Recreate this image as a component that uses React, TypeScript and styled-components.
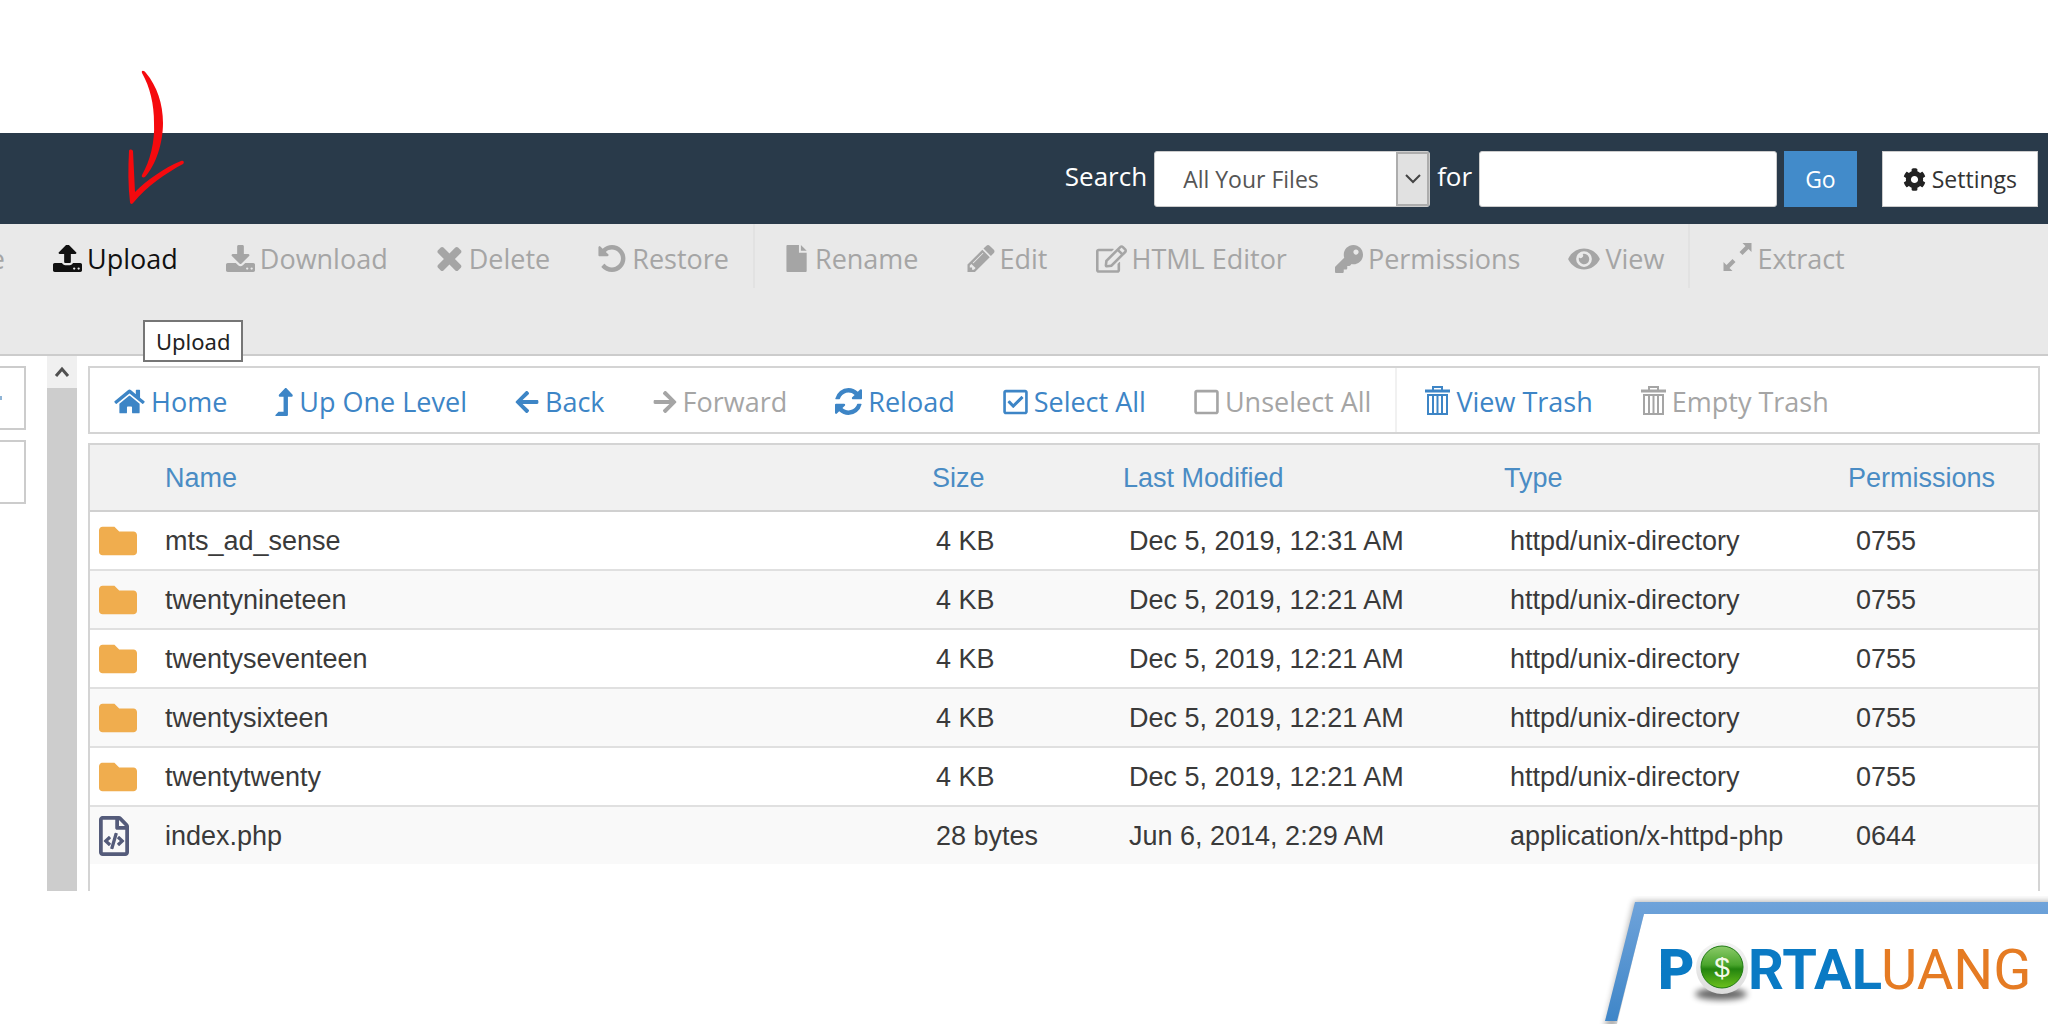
import React from "react";
import styled, { createGlobalStyle } from "styled-components";
import {
  FaRegEdit, FaKey, FaEye, FaCog, FaHome, FaLevelUpAlt, FaArrowLeft, FaArrowRight,
  FaRegCheckSquare, FaRegSquare, FaFolder, FaRegFileCode,
} from "react-icons/fa";

const Global = createGlobalStyle`
  * { box-sizing: border-box; }
  body { margin: 0; background: #fff; font-family: "Open Sans", "Noto Sans", sans-serif; }
  button, input, select { font-family: inherit; margin: 0; }
`;

const Page = styled.div`
  position: relative;
  min-height: 100vh;
  display: flex;
  flex-direction: column;
  overflow: hidden;
  padding-top: 133px;
`;

const Header = styled.header`
  display: flex;
  align-items: center;
  justify-content: flex-end;
  padding: 18px 10px 17px;
  background: #293a4a;
`;

const SearchForm = styled.form`
  display: flex;
  align-items: center;
  gap: 7px;
  margin-right: 25px;
`;

const SearchLabel = styled.label`
  color: #fff;
  font-size: 26px;
  line-height: 50px;
  padding-bottom: 6px;
`;

const SelectBox = styled.div`
  position: relative;
  display: flex;
  width: 276px;
  height: 56px;
`;

const Select = styled.select`
  appearance: none;
  width: 100%;
  border: 1px solid #ccc;
  border-radius: 3px;
  background: #fff;
  color: #555;
  font-size: 23px;
  padding: 0 28px;
`;

const SelectArrow = styled.span`
  position: absolute;
  top: 1px;
  right: 1px;
  bottom: 1px;
  width: 33px;
  display: grid;
  place-items: center;
  background: #e1e1e1;
  border: 2px solid #adadad;
  pointer-events: none;
`;

const SearchInput = styled.input`
  width: 298px;
  height: 56px;
  border: 1px solid #ccc;
  border-radius: 3px;
  background: #fff;
  font-size: 23px;
  padding: 0 12px;
`;

const HeaderButton = styled.button<{ $primary?: boolean }>`
  display: flex;
  align-items: center;
  gap: 6px;
  height: 56px;
  padding: 0 20px;
  border: 1px solid ${(p) => (p.$primary ? "#428bca" : "#ccc")};
  background: ${(p) => (p.$primary ? "#428bca" : "#fff")};
  color: ${(p) => (p.$primary ? "#fff" : "#333")};
  font-size: 23px;
  svg { width: 23px; height: 23px; color: #222; }
`;

const ActionBar = styled.nav`
  display: flex;
  align-items: flex-start;
  height: 132px;
  background: #e9e9e9;
  border-bottom: 2px solid #ccc;
`;

const Divider = styled.span<{ $light?: boolean }>`
  width: 2px;
  height: 64px;
  margin-right: ${(p) => (p.$light ? 4 : 7)}px;
  background: ${(p) => (p.$light ? "#f1f1f1" : "#e2e2e2")};
`;

const Action = styled.button<{ $tone: string; $w?: number; $h?: number }>`
  display: flex;
  align-items: center;
  gap: 5px;
  height: 64px;
  padding: 5px 24px 0;
  border: 0;
  background: none;
  color: ${(p) => p.$tone};
  font-size: 27px;
  line-height: 36px;
  white-space: nowrap;
  svg {
    flex: none;
    width: ${(p) => p.$w}px;
    height: ${(p) => p.$h}px;
  }
`;

const CutAction = styled(Action)`
  width: 29px;
  padding-left: 0;
  justify-content: flex-end;
  overflow: hidden;
`;

const Body = styled.main`
  display: grid;
  grid-template-columns: 26px 30px 1fr;
  padding-right: 8px;
`;

const Side = styled.aside`
  display: flex;
  flex-direction: column;
  gap: 10px;
  padding-top: 10px;
`;

const SideBox = styled.div<{ $marked?: boolean }>`
  display: flex;
  align-items: center;
  height: 64px;
  border: 2px solid #ccc;
  border-left: 0;
  &::before {
    content: "";
    width: 2px;
    height: 4px;
    background: ${(p) => (p.$marked ? "#8fb4d6" : "none")};
  }
`;

const Scroll = styled.div`
  margin: 0 -21px 0 21px;
  background: #cdcdcd;
`;

const ScrollUp = styled.button`
  display: grid;
  place-items: center;
  width: 30px;
  height: 32px;
  padding: 0;
  border: 0;
  background: #f0f0f0;
`;

const Content = styled.section`
  display: flex;
  flex-direction: column;
  gap: 9px;
  margin-left: 32px;
  padding-top: 10px;
`;

const FileBar = styled.nav`
  display: flex;
  border: 2px solid #d4d4d4;
  ${Action} {
    gap: 6px;
    padding-top: 3px;
  }
`;

const TableFrame = styled.div`
  border: 2px solid #d4d4d4;
  border-bottom: 0;
  padding-bottom: 27px;
`;

const Table = styled.table`
  width: 100%;
  table-layout: fixed;
  border-collapse: separate;
  border-spacing: 0;
  font-family: "Liberation Sans", Arial, sans-serif;
  font-size: 27px;
  line-height: 30px;
  text-align: left;
  color: #3a3a3a;
`;

const HeadCell = styled.th<{ $width?: number }>`
  width: ${(p) => (p.$width ? `${p.$width}px` : "auto")};
  height: 67px;
  padding: 0;
  background: #f1f1f1;
  border-bottom: 2px solid #d0d0d0;
  color: #4a8cc4;
  font-weight: 400;
`;

const Row = styled.tr`
  &:nth-child(even) td { background: #f9f9f9; }
  &:last-child td { border-bottom: 0; height: 57px; }
`;

const Cell = styled.td<{ $pad?: number }>`
  height: 59px;
  padding: 0 0 0 ${(p) => p.$pad ?? 0}px;
  border-bottom: 2px solid #e0e0e0;
  white-space: nowrap;
`;

const FolderIcon = styled(FaFolder)`
  display: block;
  width: 38px;
  height: 38px;
  color: #f0ad4e;
`;

const CodeIcon = styled(FaRegFileCode)`
  display: block;
  width: 30px;
  height: 40px;
  color: #545b7a;
`;

const Footer = styled.footer`
  display: flex;
  justify-content: flex-end;
  margin-top: auto;
`;

const Tooltip = styled.div`
  position: absolute;
  left: 143px;
  top: 320px;
  padding: 4px 11px;
  border: 2px solid #767676;
  background: #fff;
  color: #222;
  font-family: "Noto Sans", sans-serif;
  font-size: 22px;
  line-height: 30px;
`;

const Pointer = styled.svg`
  position: absolute;
  left: 120px;
  top: 66px;
`;

const glyph = (viewBox: string, d: string) => () => (
  <svg viewBox={viewBox} fill="currentColor">
    <path d={d} />
  </svg>
);

const Upload = glyph(
  "64 128 1664 1536",
  "M1344 1472q0-26-19-45t-45-19-45 19-19 45 19 45 45 19 45-19 19-45zm256 0q0-26-19-45t-45-19-45 19-19 45 19 45 45 19 45-19 19-45zm128-224v320q0 40-28 68t-68 28h-1472q-40 0-68-28t-28-68v-320q0-40 28-68t68-28h427q21 56 70.500 92t110.500 36h256q61 0 110.500-36t70.500-92h427q40 0 68 28t28 68zm-325-648q-17 40-59 40h-256v448q0 26-19 45t-45 19h-256q-26 0-45-19t-19-45v-448h-256q-42 0-59-40-17-39 14-69l448-448q18-19 45-19t45 19l448 448q31 30 14 69z"
);
const Download = glyph(
  "64 0 1664 1536",
  "M1344 1344q0-26-19-45t-45-19-45 19-19 45 19 45 45 19 45-19 19-45zm256 0q0-26-19-45t-45-19-45 19-19 45 19 45 45 19 45-19 19-45zm128-224v320q0 40-28 68t-68 28h-1472q-40 0-68-28t-28-68v-320q0-40 28-68t68-28h465l135 136q58 56 136 56t136-56l136-136h464q40 0 68 28t28 68zm-325-569q17 41-14 70l-448 448q-18 19-45 19t-45-19l-448-448q-31-29-14-70 17-39 59-39h256v-448q0-26 19-45t45-19h256q26 0 45 19t19 45v448h256q42 0 59 39z"
);
const Delete = glyph(
  "232 366 1386 1188",
  "M1490 1322q0 40-28 68l-136 136q-28 28-68 28t-68-28l-294-294-294 294q-28 28-68 28t-68-28l-136-136q-28-28-28-68t28-68l294-294-294-294q-28-28-28-68t28-68l136-136q28-28 68-28t68 28l294 294 294-294q28-28 68-28t68 28l136 136q28 28 28 68t-28 68l-294 294 294 294q28 28 28 68z"
);
const Restore = glyph(
  "128 128 1600 1536",
  "M1664 896q0 156-61 298t-164 245-245 164-298 61q-172 0-327-72.500t-264-204.500q-7-10-6.500-22.500t8.500-20.500l137-138q10-9 25-9 16 2 23 12 73 95 179 147t225 52q104 0 198.500-40.500t163.500-109.500 109.500-163.500 40.500-198.500-40.500-198.500-109.500-163.500-163.500-109.500-198.500-40.500q-98 0-188 35.500t-160 101.500l137 138q31 30 14 69-17 40-59 40h-448q-26 0-45-19t-19-45v-448q0-42 40-59 39-17 69 14l130 129q107-101 244.500-156.500t284.500-55.500q156 0 298 61t245 164 164 245 61 298z"
);
const Rename = glyph("0 0 24 28", "M0 1q0-1 1-1h12v8h8v19q0 1-1 1H1q-1 0-1-1zM15 0l6 6h-6z");
const Pencil = glyph(
  "128 149 1515 1515",
  "M491 1536l91-91-235-235-91 91v107h128v128h107zm523-928q0-22-22-22-10 0-17 7l-542 542q-7 7-7 17 0 22 22 22 10 0 17-7l542-542q7-7 7-17zm-54-192l416 416-832 832h-416v-416zm683 96q0 53-37 90l-166 166-416-416 166-165q36-38 90-38 53 0 91 38l235 234q37 39 37 91z"
);
const Reload = glyph(
  "128 128 1536 1536",
  "M1639 1056q0 5-1 7-64 268-268 434.500t-478 166.500q-146 0-282.500-55t-243.500-157l-129 129q-19 19-45 19t-45-19-19-45v-448q0-26 19-45t45-19h448q26 0 45 19t19 45-19 45l-137 137q71 66 161 102t187 36q134 0 250-65t186-179q11-17 53-117 8-23 30-23h192q13 0 22.500 9.500t9.500 22.500zm25-800v448q0 26-19 45t-45 19h-448q-26 0-45-19t-19-45 19-45l138-138q-148-137-349-137-134 0-250 65t-186 179q-11 17-53 117-8 23-30 23h-199q-13 0-22.500-9.500t-9.500-22.500v-7q65-268 270-434.500t480-166.500q146 0 284 55.500t245 156.500l130-129q19-19 45-19t45 19 19 45z"
);
const Extract = glyph(
  "-2 0 30 32",
  "M19 0h9v9l-3-3-6 6-3-3 6-6zM0 28v-9l3 3 6-6 3 3-6 6 3 3z"
);

const Trash = () => (
  <svg viewBox="0 0 25 32" fill="none" stroke="currentColor">
    <path d="M8 4V1h9v3" strokeWidth="2" />
    <path d="M0 5h25" strokeWidth="3" />
    <path d="M3 9h19v19H3z" strokeWidth="2" />
    <path d="M8 10v18M12.500 10v18M17 10v18" strokeWidth="2" />
  </svg>
);

type Item = { label: string; icon: React.ElementType; w: number; h: number; on?: boolean };

const actions: (Item | null)[] = [
  { label: "Upload", icon: Upload, w: 29, h: 27, on: true },
  { label: "Download", icon: Download, w: 29, h: 27 },
  { label: "Delete", icon: Delete, w: 28, h: 24 },
  { label: "Restore", icon: Restore, w: 29, h: 27 },
  null,
  { label: "Rename", icon: Rename, w: 24, h: 27 },
  { label: "Edit", icon: Pencil, w: 28, h: 27 },
  { label: "HTML Editor", icon: FaRegEdit, w: 31, h: 28 },
  { label: "Permissions", icon: FaKey, w: 28, h: 28 },
  { label: "View", icon: FaEye, w: 32, h: 28 },
  null,
  { label: "Extract", icon: Extract, w: 31, h: 32 },
];

const fileActions: (Item | null)[] = [
  { label: "Home", icon: FaHome, w: 31, h: 27, on: true },
  { label: "Up One Level", icon: FaLevelUpAlt, w: 18, h: 28, on: true },
  { label: "Back", icon: FaArrowLeft, w: 24, h: 26, on: true },
  { label: "Forward", icon: FaArrowRight, w: 24, h: 26 },
  { label: "Reload", icon: Reload, w: 27, h: 27, on: true },
  { label: "Select All", icon: FaRegCheckSquare, w: 25, h: 28, on: true },
  { label: "Unselect All", icon: FaRegSquare, w: 25, h: 28 },
  null,
  { label: "View Trash", icon: Trash, w: 25, h: 32, on: true },
  { label: "Empty Trash", icon: Trash, w: 25, h: 32 },
];

const dir = "httpd/unix-directory";
const files = [
  ["mts_ad_sense", "4 KB", "Dec 5, 2019, 12:31 AM", dir, "0755"],
  ["twentynineteen", "4 KB", "Dec 5, 2019, 12:21 AM", dir, "0755"],
  ["twentyseventeen", "4 KB", "Dec 5, 2019, 12:21 AM", dir, "0755"],
  ["twentysixteen", "4 KB", "Dec 5, 2019, 12:21 AM", dir, "0755"],
  ["twentytwenty", "4 KB", "Dec 5, 2019, 12:21 AM", dir, "0755"],
  ["index.php", "28 bytes", "Jun 6, 2014, 2:29 AM", "application/x-httpd-php", "0644"],
];

const Logo = () => (
  <svg width="460" height="128" viewBox="1588 896 460 128" role="img" aria-label="Portal Uang">
    <defs>
      <linearGradient id="band" x1="0" y1="0" x2="0" y2="1">
        <stop offset="0" stopColor="#6fa3da" />
        <stop offset="1" stopColor="#3f86c8" />
      </linearGradient>
      <linearGradient id="coin" x1="0" y1="0" x2="0" y2="1">
        <stop offset="0" stopColor="#8ccb6a" />
        <stop offset="0.450" stopColor="#4aa52c" />
        <stop offset="0.550" stopColor="#23840f" />
        <stop offset="1" stopColor="#6cc11c" />
      </linearGradient>
      <linearGradient id="ring" x1="0" y1="0" x2="0" y2="1">
        <stop offset="0" stopColor="#f4f4f4" />
        <stop offset="1" stopColor="#dcdcdc" />
      </linearGradient>
      <filter id="soft" x="-20%" y="-50%" width="140%" height="200%">
        <feGaussianBlur stdDeviation="3" />
      </filter>
    </defs>
    <path d="M1634 901H2060V915H1643L1616 1030H1604z" fill="#000" opacity="0.300" filter="url(#soft)" />
    <path d="M1644 914H2048V1024H1617z" fill="#fff" />
    <path d="M1635 902H2048V914H1644L1617 1021H1605z" fill="url(#band)" />
    <g fontFamily="Roboto, sans-serif" fontSize="56">
      <text x="1658" y="989" fill="#0a7ac4" fontWeight="900">P</text>
      <text x="1748" y="989" fill="#0a7ac4" fontWeight="700">RTAL</text>
      <text x="1881" y="989" fill="#e57b23" fontWeight="400">UANG</text>
    </g>
    <ellipse cx="1721" cy="994" rx="26" ry="6" fill="#000" opacity="0.600" filter="url(#soft)" />
    <circle cx="1722" cy="968" r="26" fill="url(#ring)" />
    <circle cx="1722" cy="967" r="21" fill="url(#coin)" stroke="#1e7a12" />
    <text x="1722" y="977" fill="#f4f9e8" fontFamily="'Liberation Sans', sans-serif" fontSize="28" textAnchor="middle">$</text>
  </svg>
);

const renderItems = (items: (Item | null)[], color: string, light?: boolean) =>
  items.map((it, i) =>
    it ? (
      <Action key={it.label} type="button" $tone={it.on ? color : "#a5a5a5"} $w={it.w} $h={it.h}>
        <it.icon />
        {it.label}
      </Action>
    ) : (
      <Divider key={i} $light={light} />
    )
  );

export default function App() {
  return (
    <Page>
      <Global />
      <Header>
        <SearchForm onSubmit={(e) => e.preventDefault()}>
          <SearchLabel htmlFor="scope">Search</SearchLabel>
          <SelectBox>
            <Select id="scope">
              <option>All Your Files</option>
            </Select>
            <SelectArrow>
              <svg width="16" height="10" viewBox="0 0 16 10" fill="none" stroke="#444" strokeWidth="2">
                <path d="M1 1l7 7 7-7" />
              </svg>
            </SelectArrow>
          </SelectBox>
          <SearchLabel htmlFor="query">for</SearchLabel>
          <SearchInput id="query" type="text" />
          <HeaderButton type="submit" $primary>Go</HeaderButton>
        </SearchForm>
        <HeaderButton type="button"><FaCog />Settings</HeaderButton>
      </Header>
      <ActionBar>
        <CutAction type="button" $tone="#a5a5a5">Move</CutAction>
        {renderItems(actions, "#111")}
      </ActionBar>
      <Body>
        <Side>
          <SideBox $marked />
          <SideBox />
        </Side>
        <Scroll>
          <ScrollUp type="button" aria-label="Scroll up">
            <svg width="16" height="12" viewBox="0 0 16 12" fill="none" stroke="#505050" strokeWidth="3">
              <path d="M2 10l6-7 6 7" />
            </svg>
          </ScrollUp>
        </Scroll>
        <Content>
          <FileBar>{renderItems(fileActions, "#3d85c6", true)}</FileBar>
          <TableFrame>
            <Table>
              <thead>
                <tr>
                  <HeadCell $width={75} aria-label="Kind" />
                  <HeadCell>Name</HeadCell>
                  <HeadCell $width={191}>Size</HeadCell>
                  <HeadCell $width={381}>Last Modified</HeadCell>
                  <HeadCell $width={344}>Type</HeadCell>
                  <HeadCell $width={190}>Permissions</HeadCell>
                </tr>
              </thead>
              <tbody>
                {files.map(([name, size, date, type, perm]) => (
                  <Row key={name}>
                    <Cell $pad={9}>{type === dir ? <FolderIcon /> : <CodeIcon />}</Cell>
                    <Cell>{name}</Cell>
                    <Cell $pad={4}>{size}</Cell>
                    <Cell $pad={6}>{date}</Cell>
                    <Cell $pad={6}>{type}</Cell>
                    <Cell $pad={8}>{perm}</Cell>
                  </Row>
                ))}
              </tbody>
            </Table>
          </TableFrame>
        </Content>
      </Body>
      <Footer>
        <Logo />
      </Footer>
      <Tooltip role="tooltip">Upload</Tooltip>
      <Pointer width="76" height="144" viewBox="120 66 76 144" fill="#f50a0e">
        <path d="M142 73c-1-3 2-3 4 0c11 13 17 31 17 50c0 20-7 42-18 54c-2 1-4 0-3-2c8-14 13-33 12-52c0-19-4-36-12-50z" />
        <path d="M129 151c0-2 3-2 4 0l2 41c12-12 29-24 46-31c2-1 4 1 2 3c-17 9-37 23-49 38c-2 3-4 2-4 0c-2-16-2-34-1-51z" />
      </Pointer>
    </Page>
  );
}
